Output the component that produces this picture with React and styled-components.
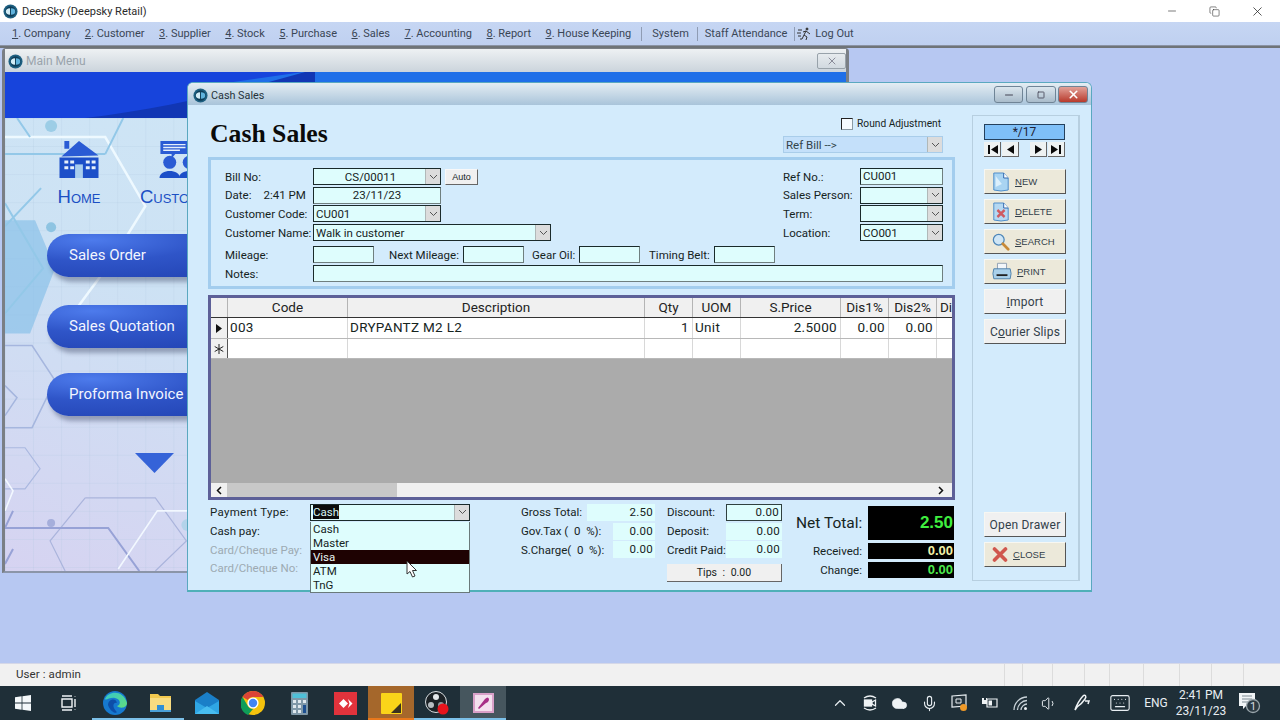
import React from 'react'
import styled, {createGlobalStyle} from 'styled-components'
import {ChevronUp, Cloud, Mic, Volume1, Keyboard, Minus, X, Copy, Square} from 'lucide-react'

const ui = 'Roboto, "Noto Sans", sans-serif'

const Global = createGlobalStyle`
  html, body { margin: 0; padding: 0; overflow: hidden; background: #b7c8f2; }
  * { box-sizing: border-box; }
  u { text-underline-offset: 1px; text-decoration-thickness: 1px; }
`

const Screen = styled.div`
  width: 1280px;
  height: 720px;
  display: flex;
  flex-direction: column;
  font-family: ${ui};
  font-size: 12px;
  color: #16241e;
  overflow: hidden;
`

/* app frame */
const TitleBar = styled.div`
  height: 22px;
  background: #fff;
  display: flex;
  align-items: center;
  padding-left: 3px;
  gap: 4px;
  color: #2a2a2a;
  font-size: 11px;
`
const FrameButtons = styled.div`
  margin-left: auto;
  padding-right: 1px;
  display: flex;
  align-items: center;
  color: #222;
`
const FrameButton = styled.div`
  width: 43px;
  display: flex;
  justify-content: center;
`
const MenuBar = styled.div`
  height: 24px;
  background: linear-gradient(#c6d6f3, #bfd0f0);
  border-bottom: 1px solid #8a93a4;
  display: flex;
  align-items: center;
  padding-left: 12px;
  gap: 14.5px;
  font-size: 11px;
  color: #3a4656;
  white-space: nowrap;
`
const MenuSep = styled.span`
  width: 1px;
  height: 14px;
  background: #8f9cb4;
  margin: 0 ${p => p.$r}px 0 ${p => p.$l}px;
`
const LogOut = styled.span`
  display: flex;
  align-items: center;
  gap: 3px;
  margin-left: -2px;
`
const Desktop = styled.div`
  flex: 1;
  position: relative;
  background: #b7c8f2;
  border-top: 2px solid #6f7478;
`
const StatusBar = styled.div`
  height: 23px;
  background: #f1f1f1;
  border-top: 1px solid #d5d8e8;
  display: flex;
  align-items: center;
  padding-left: 16px;
  color: #333;
  font-size: 11.5px;
  letter-spacing: 0.1px;
`
const StatusText = styled.span`
  margin-bottom: 2px;
`
const StatusCells = styled.div`
  margin-left: auto;
  display: flex;
  height: 100%;
  margin-right: 8px;
`
const StatusCell = styled.div`
  width: ${p => p.$w}px;
  border-left: 1px solid #dcdcdc;
`

/* main menu window, behind */
const MainWindow = styled.div`
  position: absolute;
  left: 2px;
  top: 0;
  width: 847px;
  height: 525px;
  background: #c4d6ee;
  border: 3px solid #7a7f85;
  border-top: 1px solid #7a7f85;
  border-bottom: 2px solid #8b95a8;
  border-radius: 4px 4px 0 0;
  display: flex;
  flex-direction: column;
`
const MainTitle = styled.div`
  height: 23px;
  flex: none;
  background: linear-gradient(#eef1f3, #cbd4dc);
  display: flex;
  align-items: center;
  padding: 1px 0 0 3px;
  gap: 3px;
  color: #9aa4ac;
  font-size: 12px;
`
const GhostClose = styled.div`
  margin-left: auto;
  width: 29px;
  height: 16px;
  border: 1px solid #98a2aa;
  border-radius: 2px;
  display: flex;
  align-items: center;
  justify-content: center;
  color: #667;
`
const Banner = styled.svg`
  display: block;
  flex: none;
  width: 100%;
  height: 46px;
`
const MainBody = styled.div`
  flex: 1;
  position: relative;
  overflow: hidden;
  background: linear-gradient(200deg, #cfe8f7 0%, #cde2f4 55%, #d6d3f1 100%);
  padding: 22px 0 0 42px;
`
const MainArt = styled.svg`
  position: absolute;
  left: 0;
  top: 0;
  width: 100%;
  height: 100%;
`
const Tiles = styled.div`
  position: relative;
  display: flex;
  gap: 39px;
  margin-left: 11px;
  height: 66px;
`
const Tile = styled.div`
  width: ${p => p.$w}px;
  display: flex;
  flex-direction: column;
  align-items: center;
  color: #1b4fc4;
  font-family: "Liberation Sans", sans-serif;
  font-size: 18.5px;
  line-height: 18px;
  white-space: nowrap;
  font-variant: small-caps;
  gap: 9px;
`
const Pills = styled.div`
  position: relative;
  display: flex;
  flex-direction: column;
  margin-top: 28px;
`
const Pill = styled.div`
  width: 240px;
  height: 43px;
  margin-top: ${p => p.$gap}px;
  border-radius: 22px 0 0 22px;
  background: radial-gradient(ellipse at 45px 6px, #4d7bec 0%, #2f55c8 40%, #1f3fae 100%);
  box-shadow: 3px 5px 4px rgba(70, 80, 110, 0.45);
  color: #f2f5ff;
  font-size: 15px;
  display: flex;
  align-items: center;
  padding: 0 0 2px 22px;
`
const DownArrow = styled.div`
  position: relative;
  width: 39px;
  height: 20px;
  margin: 37px 0 0 88px;
  background: #3563d8;
  clip-path: polygon(0 0, 100% 0, 50% 100%);
`

/* cash sales window */
const SalesWindow = styled.div`
  position: absolute;
  left: 187px;
  top: 34px;
  width: 905px;
  height: 510px;
  background: #d3ebfc;
  border: 1px solid #5aa8c0;
  border-bottom: 2px solid #4fb0b8;
  border-radius: 6px 6px 0 0;
  display: flex;
  flex-direction: column;
`
const SalesTitle = styled.div`
  height: 22px;
  flex: none;
  background: linear-gradient(#e4edf3, #a9c4da);
  border-radius: 5px 5px 0 0;
  display: flex;
  align-items: center;
  padding: 3px 3px 0 5px;
  gap: 3px;
  font-size: 10.8px;
  color: #26323a;
`
const WinControls = styled.div`
  margin-left: auto;
  display: flex;
  gap: 2.5px;
`
const WinControl = styled.div`
  width: ${p => p.$w}px;
  height: 17px;
  margin-top: -2px;
  border: 1px solid #6f8496;
  border-radius: 3px;
  background: ${p => p.$close ? 'linear-gradient(#e2a198, #b83a2c)' : 'linear-gradient(#dbe6ee, #a9bccb)'};
  color: ${p => p.$close ? '#fff' : '#445'};
  display: flex;
  align-items: center;
  justify-content: center;
`
const SalesBody = styled.div`
  flex: 1;
  display: flex;
  padding-left: 20px;
  gap: 17px;
`
const Column = styled.div`
  width: 747px;
  display: flex;
  flex-direction: column;
`
const Header = styled.div`
  height: 52px;
  display: flex;
  justify-content: space-between;
  padding: 0 12px 0 2px;
`
const BigTitle = styled.h1`
  margin: 15px 0 0;
  font-family: "Liberation Serif", serif;
  font-size: 25.7px;
  line-height: 28px;
  font-weight: 700;
  color: #0a0a0a;
`
const HeaderRight = styled.div`
  width: 160px;
  padding-top: 12px;
  display: flex;
  flex-direction: column;
  gap: 6px;
`
const RoundAdjust = styled.div`
  display: flex;
  align-items: center;
  justify-content: flex-end;
  gap: 4px;
  height: 13px;
  font-size: 10.2px;
  padding-right: 2px;
  white-space: nowrap;
`
const CheckBox = styled.span`
  width: 12px;
  height: 12px;
  background: #f6fbff;
  border: 1px solid #8a9aa4;
  border-top-color: #222;
  border-left-color: #222;
`
const FormBox = styled.div`
  height: 132px;
  border: 3px solid #a3cdee;
  padding: 8px 9px 0 14px;
  display: flex;
  flex-direction: column;
`
const FormTop = styled.div`
  display: flex;
  justify-content: space-between;
`
const Rows = styled.div`
  display: flex;
  flex-direction: column;
  gap: 1.7px;
`
const Row = styled.div`
  display: flex;
  align-items: center;
  height: 17px;
  margin-top: ${p => p.$top || 0}px;
`
const Label = styled.span`
  width: ${p => p.$w ? p.$w + 'px' : 'auto'};
  flex: none;
  white-space: nowrap;
  margin-left: ${p => p.$left || 0}px;
  color: ${p => p.$muted ? '#9daab2' : 'inherit'};
  font-size: 11.5px;
`
const TimeText = styled.span`
  margin-left: 12px;
`
const Input = styled.div`
  width: ${p => p.$w ? p.$w + 'px' : 'auto'};
  flex: ${p => p.$w ? 'none' : 1};
  height: 17px;
  line-height: 15px;
  background: #defdfd;
  border: 1px solid #6f7f7f;
  border-top-color: #1a2a2a;
  border-left-color: #1a2a2a;
  padding: 0 2px;
  font-size: 11.5px;
  text-align: ${p => p.$center ? 'center' : 'left'};
`
const SelectBox = styled.div`
  position: relative;
  width: ${p => p.$w}px;
  flex: none;
  height: 17px;
  display: flex;
  align-items: center;
  background: ${p => p.$flat ? '#c4e0fa' : '#defdfd'};
  border: 1px solid ${p => p.$flat ? '#a9cdea' : '#1a2a2a'};
  font-size: 11.5px;
  padding-left: 2px;
  color: ${p => p.$flat ? '#33444c' : 'inherit'};
`
const SelectText = styled.span`
  flex: 1;
  text-align: ${p => p.$center ? 'center' : 'left'};
`
const Selected = styled.span`
  background: #0c0c0c;
  color: #d8f4f4;
`
const SelectArrow = styled.span`
  width: 15px;
  height: 15px;
  flex: none;
  background: #dcdcdc;
  border-left: 1px solid #b0b8b8;
  display: flex;
  align-items: center;
  justify-content: center;
  color: #555;
`
const AutoButton = styled.div`
  width: 33px;
  height: 16px;
  margin-left: 4px;
  background: #f0f0f0;
  border: 1px solid #f8f8f8;
  border-right-color: #666;
  border-bottom-color: #666;
  font-family: "Liberation Sans", sans-serif;
  font-size: 9px;
  line-height: 14px;
  text-align: center;
`

/* data grid */
const Grid = styled.div`
  margin-top: 6px;
  height: 205px;
  border: 3px solid #5d6098;
  display: flex;
  flex-direction: column;
  background: #ababab;
  font-size: 13.5px;
`
const GridRow = styled.div`
  display: grid;
  grid-template-columns: 17px 120px 297px 48px 48px 100px 48px 48px 16px;
  height: ${p => p.$h}px;
  flex: none;
  background: #fff;
  border-bottom: 1px solid ${p => p.$head ? '#333' : '#b8b8b8'};
  overflow: hidden;
`
const HeadCell = styled.div`
  background: #f0f0f0;
  border-right: 1px solid #b4b4b4;
  text-align: ${p => p.$clip ? 'left' : 'center'};
  padding-left: ${p => p.$clip ? 3 : 0}px;
  line-height: 19px;
  color: #222;
`
const Cell = styled.div`
  border-right: 1px solid #d8d8d8;
  padding: 0 3px 0 2px;
  line-height: 19px;
  letter-spacing: 0.3px;
  white-space: nowrap;
  text-align: ${p => p.$right ? 'right' : 'left'};
`
const RowHead = styled.div`
  background: #f0f0f0;
  border-right: 1px solid #555;
  display: flex;
  align-items: center;
  justify-content: center;
  color: #222;
`
const GridFill = styled.div`
  flex: 1;
`
const ScrollBar = styled.div`
  height: 14px;
  flex: none;
  background: #f0f0f0;
  display: flex;
  align-items: center;
  justify-content: space-between;
  padding-right: 3px;
  color: #111;
`
const ScrollEnd = styled.span`
  width: 16px;
  display: flex;
  justify-content: center;
`
const ScrollThumb = styled.span`
  width: 170px;
  height: 14px;
  background: #c8c8c8;
  margin-right: auto;
`

/* totals */
const Bottom = styled.div`
  display: flex;
  padding: 3px 0 0 2px;
`
const Stack = styled.div`
  width: ${p => p.$w}px;
  margin-left: ${p => p.$left || 0}px;
  flex: none;
  display: flex;
  flex-direction: column;
`
const SumRow = styled.div`
  height: 18.7px;
  display: flex;
  align-items: center;
  justify-content: space-between;
`
const PayField = styled.div`
  position: relative;
  margin-left: 100px;
`
const PayLabel = styled(Label)`
  position: absolute;
  left: -100px;
  top: 1px;
  letter-spacing: 0.3px;
`
const Dropdown = styled.div`
  position: absolute;
  left: -1px;
  top: 17px;
  width: 160px;
  height: 71px;
  z-index: 3;
  background: #defdfd;
  border: 1px solid #6a7a7a;
  border-top: 0;
  font-size: 11.5px;
`
const Option = styled.div`
  height: 14px;
  line-height: 14px;
  padding-left: 2px;
  background: ${p => p.$active ? '#1e0202' : 'transparent'};
  color: ${p => p.$active ? '#e8f4f4' : 'inherit'};
`
const Pointer = styled.svg`
  position: absolute;
  left: 95px;
  top: 38px;
  width: 12px;
  height: 18px;
`
const Amount = styled.div`
  width: ${p => p.$w}px;
  height: 17px;
  line-height: ${p => p.$boxed ? 15 : 17}px;
  flex: none;
  background: #defdfd;
  border: ${p => p.$boxed ? '1px solid #30403f' : '0'};
  padding-right: 2px;
  text-align: right;
  font-size: 11.5px;
  letter-spacing: 0.3px;
`
const TipsButton = styled.div`
  margin-top: 5px;
  width: 115px;
  height: 18px;
  background: #f0f0f0;
  border-right: 1px solid #666;
  border-bottom: 1px solid #666;
  text-align: center;
  font-size: 10.5px;
  line-height: 17px;
  word-spacing: 3px;
`
const NetRow = styled.div`
  display: flex;
  align-items: center;
  justify-content: space-between;
  margin-top: ${p => p.$top || 0}px;
`
const NetLabel = styled.span`
  font-size: ${p => p.$big ? 15.5 : 11.5}px;
  width: 66px;
  white-space: nowrap;
  text-align: right;
`
const LedBox = styled.div`
  width: 86px;
  height: ${p => p.$h}px;
  line-height: ${p => p.$h}px;
  background: #000;
  color: ${p => p.$c};
  font-family: "Liberation Sans", sans-serif;
  font-weight: 700;
  font-size: ${p => p.$big ? 17 : 13}px;
  text-align: right;
  padding-right: 1px;
`

/* right hand panel */
const Panel = styled.div`
  width: 108px;
  margin: 10px 0 9px;
  border: 1px solid #b7cfe0;
  border-right-width: 2px;
  padding: 8px 13px 0 11px;
  display: flex;
  flex-direction: column;
`
const Pager = styled.div`
  height: 16px;
  line-height: 15px;
  background: #7fc0f8;
  border: 1px solid #24405c;
  text-align: center;
  color: #223;
`
const NavRow = styled.div`
  display: flex;
  margin-top: 2px;
  gap: 1px;
`
const NavButton = styled.div`
  width: 17px;
  height: 15px;
  margin-left: ${p => p.$left || 0}px;
  border-right: 1px solid #666;
  border-bottom: 1px solid #666;
  background: #eef2f2;
  display: flex;
  align-items: center;
  justify-content: center;
`
const Actions = styled.div`
  display: flex;
  flex-direction: column;
  gap: 5px;
  margin-top: ${p => p.$top}px;
`
const Action = styled.div`
  height: 25px;
  width: 82px;
  background: ${p => p.$icon ? '#ece9da' : '#f0f0f0'};
  border: 1px solid #f7f7f2;
  border-right-color: #555;
  border-bottom-color: #555;
  display: flex;
  align-items: center;
  justify-content: ${p => p.$icon ? 'flex-start' : 'center'};
  padding-left: ${p => p.$icon ? 7 : 0}px;
  gap: 5px;
  font-family: ${p => p.$icon ? '"Liberation Sans", sans-serif' : 'inherit'};
  font-size: ${p => p.$icon ? 9.5 : 12}px;
  letter-spacing: ${p => p.$icon ? 0 : 0.2}px;
  color: #33404a;
  white-space: nowrap;
`

/* taskbar */
const Taskbar = styled.div`
  height: 34px;
  background: #1f2f38;
  display: flex;
  align-items: stretch;
  color: #e8eef2;
`
const TaskTile = styled.div`
  width: 46px;
  display: flex;
  align-items: center;
  justify-content: center;
  background: ${p => p.$bg || 'transparent'};
  box-shadow: ${p => p.$line ? `inset 0 -2px 0 ${p.$line}` : 'none'};
`
const Tray = styled.div`
  margin-left: auto;
  display: flex;
  align-items: center;
  padding-right: 10px;
`
const TrayItem = styled.div`
  width: ${p => p.$w}px;
  display: flex;
  justify-content: center;
  align-items: center;
  font-size: 12px;
  line-height: 16px;
  text-align: center;
`

const Logo = () => (
  <svg width="15" height="15" viewBox="0 0 16 16">
    <circle cx="8" cy="8" r="7.5" fill="#1d5f80" />
    <circle cx="8" cy="8" r="5.5" fill="#0e3d58" />
    <path d="M3 8a5 3.5 0 0 1 4.500-3.500v7A5 3.500 0 0 1 3 8z" fill="#d2ecf6" />
    <path d="M8.500 4.500a4.500 3.500 0 0 1 4.500 3.500 4.500 3.500 0 0 1-4.500 3.500z" fill="#5fb2dc" />
  </svg>
)

const Chevron = () => (
  <svg width="9" height="6" viewBox="0 0 9 6"><path d="M1 1l3.500 3.500L8 1" fill="none" stroke="currentColor" strokeWidth="1" /></svg>
)

const Select = ({w, value, center, flat, children}) => (
  <SelectBox $w={w} $flat={flat}>
    <SelectText $center={center}>{value}</SelectText>
    <SelectArrow><Chevron /></SelectArrow>
    {children}
  </SelectBox>
)

const BannerArt = () => (
  <Banner viewBox="0 0 841 46" preserveAspectRatio="none">
    <rect width="841" height="46" fill="#1744dc" />
    <path d="M298 0H841V14H200z" fill="#1f6fe8" />
    <path d="M80 46C150 38 230 20 300 0H310V46z" fill="#1136b4" />
  </Banner>
)

const Art = () => (
  <MainArt viewBox="0 0 841 452" preserveAspectRatio="xMinYMin slice">
    <defs>
      <pattern id="mesh" width="28" height="28" patternUnits="userSpaceOnUse">
        <path d="M28 0H0V28" fill="none" stroke="#a9c2dc" strokeWidth="0.7" opacity="0.55" />
      </pattern>
    </defs>
    <rect width="841" height="452" fill="url(#mesh)" />
    <path d="M0 102H30L50 150L25 215H0z" fill="#84bfe8" opacity="0.65" />
    <path d="M0 19H100L140 88L104 146L48 222" fill="none" stroke="#eef9ff" strokeWidth="2.500" />
    <path d="M0 36H100M12 0L25 19M0 85L38 150L0 195M100 36L118 0M36 70L0 108" fill="none" stroke="#93c8e8" strokeWidth="2" />
    <circle cx="46" cy="8" r="6" fill="#9ccde6" />
    <circle cx="46" cy="109" r="5" fill="#8ec4e2" />
    <path d="M0 227H27L50 262L27 309H0M0 267L12 279L0 297" fill="none" stroke="#a5b6de" strokeWidth="1.500" />
    <path d="M0 329H20L35 350L20 370H0" fill="none" stroke="#aab8e0" strokeWidth="1.200" />
    <path d="M80 379H150L181 422L150 452M80 379L45 422L60 452" fill="none" stroke="#aab4dc" strokeWidth="1.200" />
    <path d="M0 409H103L134 452M8 392L0 409M8 430L0 445" fill="none" stroke="#97a2d6" strokeWidth="2" />
    <circle cx="46" cy="404" r="4" fill="#a5aedb" />
    <circle cx="182" cy="406" r="6" fill="#b3d3ea" />
    <path d="M183 392H152L113 450M0 360L8 372L0 392" fill="none" stroke="#f2f8ff" strokeWidth="1.600" />
  </MainArt>
)

const HomeIcon = () => (
  <svg width="42" height="39" viewBox="0 0 42 40">
    <path d="M3 17L21 1L41 16zM6 1h5v8H6z" fill="#2a5bd4" />
    <path d="M1 18H41V39H1z" fill="#1c4fc8" />
    <path d="M6 21h4v3H6zM12 21h4v3h-4zM6 27h4v3H6zM12 27h4v3h-4zM28 21h4v3h-4zM34 21h4v3h-4zM28 27h4v3h-4zM34 27h4v3h-4z" fill="#e6f0fa" />
    <path d="M17 25h8v14h-8z" fill="#a8cdee" />
  </svg>
)

const CrowdIcon = () => (
  <svg width="78" height="39" viewBox="-18 0 78 42">
    <path d="M1 1H32V15H17L13 20V15H1z" fill="#2a5bd4" />
    <path d="M4 5H28M4 8H28M4 11H22" stroke="#e6f0fa" strokeWidth="1.500" />
    <circle cx="11" cy="24" r="7" fill="#2a5bd4" />
    <path d="M0 41C0 31 22 31 22 41z" fill="#1c4fc8" />
    <circle cx="32" cy="24" r="7" fill="#2a5bd4" />
    <path d="M21 41C21 31 43 31 43 41z" fill="#1c4fc8" />
  </svg>
)

const NewIcon = () => (
  <svg width="18" height="20" viewBox="0 0 20 20" preserveAspectRatio="none">
    <path d="M2 1H13L18 6V18Q10 20 2 18z" fill="#a9d4f2" stroke="#4a8ac8" />
    <path d="M13 1V6H18" fill="#fff" stroke="#2a62a8" />
    <path d="M4 4L11 12L4 15z" fill="#dcf0fc" />
  </svg>
)
const DeleteIcon = () => (
  <svg width="18" height="20" viewBox="0 0 20 20" preserveAspectRatio="none">
    <path d="M2 1H13L18 6V18Q10 20 2 18z" fill="#b5d8f2" stroke="#4a8ac8" />
    <path d="M13 1V6H18" fill="#fff" stroke="#2a62a8" />
    <path d="M6 8L14 15M14 8L6 15" stroke="#cf5a60" strokeWidth="2.600" />
  </svg>
)
const SearchIcon = () => (
  <svg width="18" height="18" viewBox="0 0 20 20">
    <circle cx="7.500" cy="7.500" r="6" fill="#cfe6f6" stroke="#4d86b8" strokeWidth="1.400" />
    <path d="M12 12L18 18" stroke="#c88a38" strokeWidth="3" strokeLinecap="round" />
  </svg>
)
const PrintIcon = () => (
  <svg width="20" height="19" viewBox="0 0 22 20">
    <path d="M6 1H16V8H6z" fill="#f2f6fa" stroke="#8a9cb0" />
    <path d="M2 7H20Q22 12 20 18H2Q0 12 2 7z" fill="#a9d0ea" stroke="#4a7ea8" />
    <path d="M5 13H17V15H5z" fill="#222" />
  </svg>
)
const CloseIcon = () => (
  <svg width="16" height="15" viewBox="0 0 15 15">
    <path d="M2 2L13 13M13 2L2 13" stroke="#d0574e" strokeWidth="3.600" strokeLinecap="round" />
  </svg>
)

const Nav = ({d}) => (
  <svg width="13" height="11" viewBox="0 0 13 11"><path d={d} fill="#0a0a0a" /></svg>
)

const NewRowMark = () => (
  <svg width="10" height="10" viewBox="0 0 10 10" fill="none" stroke="#222" strokeWidth="1">
    <path d="M5 0V10M0.700 2.500L9.300 7.500M9.300 2.500L0.700 7.500" />
  </svg>
)

const RunnerIcon = () => (
  <svg width="15" height="14" viewBox="0 0 15 14" fill="none" stroke="#333" strokeWidth="1">
    <circle cx="10" cy="2" r="1" fill="#333" />
    <path d="M9 4L7 8L10 10L9 13M7 8L5 12H3M9 4L13 7M9 4L6 5M1 3H5M0 6H4M1 9H4" />
  </svg>
)

const WinLogo = () => (
  <svg width="16" height="16" viewBox="0 0 16 16" fill="#f4f8fa">
    <path d="M0 2.300L6.600 1.300V7.600H0zM7.400 1.200L16 0V7.600H7.400zM0 8.400H6.600V14.700L0 13.700zM7.400 8.400H16V16L7.400 14.800z" />
  </svg>
)
const TaskView = () => (
  <svg width="16" height="16" viewBox="0 0 16 16" fill="none" stroke="#f0f4f6" strokeWidth="1.400">
    <path d="M1 1H11M1 15H11M1 4H11V12H1zM14 1V1.500M14 4V12M14 14.500V15" />
  </svg>
)
const EdgeIcon = () => (
  <svg width="24" height="24" viewBox="0 0 24 24">
    <defs>
      <linearGradient id="edgeA" x1="0" y1="0" x2="1" y2="1">
        <stop offset="0" stopColor="#36c6c8" />
        <stop offset="1" stopColor="#62dd7c" />
      </linearGradient>
    </defs>
    <circle cx="12" cy="12" r="12" fill="#1679cf" />
    <path d="M2 8C5 0 20 -2 24 12C24 17 17 18 14 15C18 14 18 8 12 7C7 6 3 10 2 8z" fill="url(#edgeA)" />
    <path d="M5 14C5 8 13 6 14 12C10 11 9 16 13 20C16 23 8 23 5 14z" fill="#0d4ea8" />
  </svg>
)
const FolderIcon = () => (
  <svg width="22" height="20" viewBox="0 0 22 20">
    <path d="M0 1H8L10 3H21V18H0z" fill="#f2c94f" />
    <path d="M0 5H21V18H0z" fill="#f8dc80" />
    <path d="M7 12H14V19H7z" fill="#2f8fd6" />
    <path d="M0 17H21V19H0z" fill="#4aa0d8" />
  </svg>
)
const MailIcon = () => (
  <svg width="24" height="22" viewBox="0 0 24 22">
    <path d="M12 0L24 8V22H0V8z" fill="#1a7fc8" />
    <path d="M0 9L12 16L24 9V22H0z" fill="#2fa6e4" />
    <path d="M0 22L12 14L24 22z" fill="#48bdf0" />
  </svg>
)
const ChromeIcon = () => (
  <svg width="24" height="24" viewBox="0 0 24 24">
    <circle cx="12" cy="12" r="12" fill="#f4c20d" />
    <path d="M12 0A12 12 0 0 1 22.400 6H12A6 6 0 0 0 6.800 9L1.600 6A12 12 0 0 1 12 0z" fill="#db4437" />
    <path d="M1.600 6L6.800 15A6 6 0 0 0 12 18L7 24A12 12 0 0 1 1.600 6z" fill="#0f9d58" />
    <circle cx="12" cy="12" r="5.600" fill="#fff" />
    <circle cx="12" cy="12" r="4.200" fill="#4285f4" />
  </svg>
)
const CalcIcon = () => (
  <svg width="17" height="23" viewBox="0 0 17 23">
    <rect width="17" height="23" rx="1" fill="#7f98a8" />
    <path d="M1.500 1.500H15.500V6H1.500z" fill="#4fc0d8" />
    <path d="M2 8h3v3H2zM7 8h3v3H7zM12 8h3v3h-3zM2 13h3v3H2zM7 13h3v3H7zM2 18h3v3H2zM7 18h3v3H7z" fill="#dfe8ee" />
    <path d="M12 13h3v8h-3z" fill="#1c4f90" />
  </svg>
)
const RemoteIcon = () => (
  <svg width="23" height="23" viewBox="0 0 23 23">
    <rect width="23" height="23" fill="#e2333c" />
    <path d="M5 11.500L9.500 7L14 11.500L9.500 16z" fill="#fff" />
    <path d="M14 7L18.500 11.500L14 16L15.500 11.500z" fill="#fff" />
  </svg>
)
const StickyIcon = () => (
  <svg width="21" height="21" viewBox="0 0 21 21">
    <rect width="21" height="21" rx="1" fill="#fad419" />
    <path d="M10 20L20 10V20z" fill="#3a3220" />
  </svg>
)
const ObsIcon = () => (
  <svg width="24" height="24" viewBox="0 0 24 24">
    <circle cx="11" cy="11" r="10.500" fill="#1c2226" stroke="#d8dde0" strokeWidth="1" />
    <circle cx="11" cy="6" r="3" fill="#e4e8ea" />
    <circle cx="6" cy="14" r="3" fill="#b8bec2" />
    <circle cx="16" cy="14" r="3" fill="#8e959a" />
    <circle cx="18" cy="18" r="5.500" fill="#e8141c" />
  </svg>
)
const PublisherIcon = () => (
  <svg width="21" height="20" viewBox="0 0 21 20">
    <rect width="21" height="20" fill="#d9a0c8" />
    <rect x="2" y="2" width="17" height="16" fill="#f4e0ee" />
    <path d="M5 15L12 6Q15 3 16 6Q16 9 13 10L6 16z" fill="#a82e86" />
  </svg>
)
const MeetIcon = () => (
  <svg width="14" height="18" viewBox="0 0 14 18" fill="none" stroke="#eef2f4" strokeWidth="1.300">
    <path d="M1 4Q7 0 13 4M1 14Q7 18 13 14" />
    <rect x="1.500" y="6" width="7" height="6" fill="#eef2f4" />
    <path d="M9 8L12.500 6V12L9 10z" />
  </svg>
)
const DisplayIcon = () => (
  <svg width="17" height="18" viewBox="0 0 17 18">
    <path d="M1 2L15 1V12L1 13z" fill="#26343c" stroke="#e8eef2" strokeWidth="1.200" />
    <path d="M5 5H10V9H5z" fill="none" stroke="#e8eef2" />
    <circle cx="12.500" cy="13.500" r="3.500" fill="#f09a28" />
  </svg>
)
const BatteryIcon = () => (
  <svg width="16" height="12" viewBox="0 0 16 12" fill="#eef2f4">
    <path d="M0 1H2V3H4V1H5V7H0z" />
    <path d="M5 2H15V10H5z" fill="none" stroke="#eef2f4" strokeWidth="1.200" />
    <path d="M6.500 3.500H10V8.500H6.500z" />
  </svg>
)
const SignalIcon = () => (
  <svg width="14" height="14" viewBox="0 0 14 14" fill="none" stroke="#c8d2d8" strokeWidth="1.300">
    <path d="M1 14C1 7 7 1 14 1M4.500 14C4.500 9 9 4.500 14 4.500M8 14C8 11 11 8 14 8" />
    <circle cx="12.500" cy="12.500" r="1.500" fill="#eef2f4" stroke="none" />
  </svg>
)
const PenIcon = () => (
  <svg width="17" height="18" viewBox="0 0 17 18" fill="none" stroke="#eef2f4" strokeWidth="1.500">
    <path d="M1 16C2 12 6 5 9 2C11 0 13 2 11 5C9 8 6 11 3 13M1 16L3 13M11 7L15 7L14 10" />
  </svg>
)
const BellIcon = () => (
  <svg width="24" height="22" viewBox="0 0 24 22">
    <path d="M1 1H17V14H8L5 17V14H1z" fill="#f0f4f6" />
    <path d="M4 4H14M4 7H14M4 10H11" stroke="#7d8a92" />
    <circle cx="15" cy="14" r="6.500" fill="#2c3a42" stroke="#9aa6ac" strokeWidth="1.300" />
    <text x="15" y="18" fontSize="11" textAnchor="middle" fill="#d8dee2" fontFamily="Roboto, sans-serif">1</text>
  </svg>
)

const menu = [
  ['1', 'Company'],
  ['2', 'Customer'],
  ['3', 'Supplier'],
  ['4', 'Stock'],
  ['5', 'Purchase'],
  ['6', 'Sales'],
  ['7', 'Accounting'],
  ['8', 'Report'],
  ['9', 'House Keeping'],
]

const tasks = [
  {icon: <WinLogo />},
  {icon: <TaskView />},
  {icon: <EdgeIcon />, line: '#7cc0e8'},
  {icon: <FolderIcon />, line: '#7cc0e8'},
  {icon: <MailIcon />},
  {icon: <ChromeIcon />},
  {icon: <CalcIcon />},
  {icon: <RemoteIcon />},
  {icon: <StickyIcon />, bg: '#a5672b', line: '#e8781c'},
  {icon: <ObsIcon />, line: '#7cc0e8'},
  {icon: <PublisherIcon />, bg: '#46565e', line: '#7cc0e8'},
]

const App = () => (
  <Screen>
    <Global />
    <TitleBar>
      <Logo />
      <span>DeepSky (Deepsky Retail)</span>
      <FrameButtons>
        <FrameButton><Minus size={12} strokeWidth={1.2} /></FrameButton>
        <FrameButton><Copy size={11} strokeWidth={1.2} /></FrameButton>
        <FrameButton><X size={15} strokeWidth={1.2} /></FrameButton>
      </FrameButtons>
    </TitleBar>
    <MenuBar>
      {menu.map(([n, name]) => <span key={n}><u>{n}</u>. {name}</span>)}
      <MenuSep $l={-5} $r={-4} />
      <span>System</span>
      <MenuSep $l={-6} $r={-8} />
      <span>Staff Attendance</span>
      <MenuSep $l={-8} $r={-10} />
      <LogOut><RunnerIcon />Log Out</LogOut>
    </MenuBar>
    <Desktop>
      <MainWindow>
        <MainTitle>
          <Logo />
          <span>Main Menu</span>
          <GhostClose><X size={12} strokeWidth={1.4} /></GhostClose>
        </MainTitle>
        <BannerArt />
        <MainBody>
          <Art />
          <Tiles>
            <Tile $w={42}><HomeIcon />Home</Tile>
            <Tile $w={80}><CrowdIcon />Customer</Tile>
          </Tiles>
          <Pills>
            <Pill $gap={0}>Sales Order</Pill>
            <Pill $gap={28}>Sales Quotation</Pill>
            <Pill $gap={25}>Proforma Invoice</Pill>
            <DownArrow />
          </Pills>
        </MainBody>
      </MainWindow>

      <SalesWindow>
        <SalesTitle>
          <Logo />
          <span>Cash Sales</span>
          <WinControls>
            <WinControl $w={29}><Minus size={12} /></WinControl>
            <WinControl $w={30}><Square size={8} strokeWidth={2.5} /></WinControl>
            <WinControl $w={30} $close><X size={13} strokeWidth={3} /></WinControl>
          </WinControls>
        </SalesTitle>
        <SalesBody>
          <Column>
            <Header>
              <BigTitle>Cash Sales</BigTitle>
              <HeaderRight>
                <RoundAdjust><CheckBox />Round Adjustment</RoundAdjust>
                <Select w={160} value="Ref Bill -->" flat />
              </HeaderRight>
            </Header>
            <FormBox>
              <FormTop>
                <Rows>
                  <Row><Label $w={88}>Bill No:</Label><Select w={128} value="CS/00011" center /><AutoButton>Auto</AutoButton></Row>
                  <Row><Label $w={88}>Date:<TimeText>2:41 PM</TimeText></Label><Input $w={128} $center>23/11/23</Input></Row>
                  <Row><Label $w={88}>Customer Code:</Label><Select w={128} value="CU001" /></Row>
                  <Row><Label $w={88}>Customer Name:</Label><Select w={238} value="Walk in customer" /></Row>
                </Rows>
                <Rows>
                  <Row><Label $w={77}>Ref No.:</Label><Input $w={83}>CU001</Input></Row>
                  <Row><Label $w={77}>Sales Person:</Label><Select w={83} value="" /></Row>
                  <Row><Label $w={77}>Term:</Label><Select w={83} value="" /></Row>
                  <Row><Label $w={77}>Location:</Label><Select w={83} value="CO001" /></Row>
                </Rows>
              </FormTop>
              <Row $top={5}>
                <Label $w={88}>Mileage:</Label><Input $w={61} />
                <Label $left={15} $w={74}>Next Mileage:</Label><Input $w={61} />
                <Label $left={8} $w={47}>Gear Oil:</Label><Input $w={61} />
                <Label $left={9} $w={65}>Timing Belt:</Label><Input $w={61} />
              </Row>
              <Row $top={2}><Label $w={88}>Notes:</Label><Input /></Row>
            </FormBox>

            <Grid>
              <GridRow $h={20} $head>
                <HeadCell />
                <HeadCell>Code</HeadCell>
                <HeadCell>Description</HeadCell>
                <HeadCell>Qty</HeadCell>
                <HeadCell>UOM</HeadCell>
                <HeadCell>S.Price</HeadCell>
                <HeadCell>Dis1%</HeadCell>
                <HeadCell>Dis2%</HeadCell>
                <HeadCell $clip>Di</HeadCell>
              </GridRow>
              <GridRow $h={21}>
                <RowHead><svg width="6" height="9" viewBox="0 0 6 9"><path d="M0 0L6 4.500L0 9z" fill="#111" /></svg></RowHead>
                <Cell>003</Cell>
                <Cell>DRYPANTZ M2 L2</Cell>
                <Cell $right>1</Cell>
                <Cell>Unit</Cell>
                <Cell $right>2.5000</Cell>
                <Cell $right>0.00</Cell>
                <Cell $right>0.00</Cell>
                <Cell />
              </GridRow>
              <GridRow $h={20}>
                <RowHead><NewRowMark /></RowHead>
                <Cell /><Cell /><Cell /><Cell /><Cell /><Cell /><Cell /><Cell />
              </GridRow>
              <GridFill />
              <ScrollBar>
                <ScrollEnd><svg width="6" height="9" viewBox="0 0 6 9"><path d="M5 1L1.500 4.500L5 8" fill="none" stroke="#111" strokeWidth="1.500" /></svg></ScrollEnd>
                <ScrollThumb />
                <ScrollEnd><svg width="6" height="9" viewBox="0 0 6 9"><path d="M1 1L4.500 4.500L1 8" fill="none" stroke="#111" strokeWidth="1.500" /></svg></ScrollEnd>
              </ScrollBar>
            </Grid>

            <Bottom>
              <Stack $w={311}>
                <SumRow>
                  <PayField>
                    <PayLabel>Payment Type:</PayLabel>
                    <SelectBox $w={160}>
                      <SelectText><Selected>Cash</Selected></SelectText>
                      <SelectArrow><Chevron /></SelectArrow>
                      <Dropdown>
                        <Option>Cash</Option>
                        <Option>Master</Option>
                        <Option $active>Visa</Option>
                        <Option>ATM</Option>
                        <Option>TnG</Option>
                        <Pointer viewBox="0 0 12 18">
                          <path d="M1 1V14L4 11.500L6.500 17L9 16L6.500 10.500H10.500z" fill="#fff" stroke="#333" strokeWidth="1" />
                        </Pointer>
                      </Dropdown>
                    </SelectBox>
                  </PayField>
                </SumRow>
                <SumRow><Label>Cash pay:</Label></SumRow>
                <SumRow><Label $muted>Card/Cheque Pay:</Label></SumRow>
                <SumRow><Label $muted>Card/Cheque No:</Label></SumRow>
              </Stack>
              <Stack $w={134}>
                <SumRow><Label>Gross Total:</Label><Amount $w={68}>2.50</Amount></SumRow>
                <SumRow><Label>Gov.Tax (&nbsp; 0 &nbsp;%):</Label><Amount $w={42}>0.00</Amount></SumRow>
                <SumRow><Label>S.Charge(&nbsp; 0 &nbsp;%):</Label><Amount $w={42}>0.00</Amount></SumRow>
              </Stack>
              <Stack $w={115} $left={12}>
                <SumRow><Label>Discount:</Label><Amount $w={56} $boxed>0.00</Amount></SumRow>
                <SumRow><Label>Deposit:</Label><Amount $w={56}>0.00</Amount></SumRow>
                <SumRow><Label>Credit Paid:</Label><Amount $w={56}>0.00</Amount></SumRow>
                <TipsButton>Tips : 0.00</TipsButton>
              </Stack>
              <Stack $w={158} $left={14}>
                <NetRow $top={3}><NetLabel $big>Net Total:</NetLabel><LedBox $h={34} $c="#3fee3f" $big>2.50</LedBox></NetRow>
                <NetRow $top={3}><NetLabel>Received:</NetLabel><LedBox $h={16} $c="#f2f2a8">0.00</LedBox></NetRow>
                <NetRow $top={3}><NetLabel>Change:</NetLabel><LedBox $h={16} $c="#4dea4d">0.00</LedBox></NetRow>
              </Stack>
            </Bottom>
          </Column>

          <Panel>
            <Pager>*/17</Pager>
            <NavRow>
              <NavButton><Nav d="M2 1H4V10H2zM12 1V10L5 5.500z" /></NavButton>
              <NavButton><Nav d="M10 1V10L3 5.500z" /></NavButton>
              <NavButton $left={10}><Nav d="M3 1V10L10 5.500z" /></NavButton>
              <NavButton><Nav d="M1 1V10L8 5.500zM9 1H11V10H9z" /></NavButton>
            </NavRow>
            <Actions $top={12}>
              <Action $icon><NewIcon /><span><u>N</u>EW</span></Action>
              <Action $icon><DeleteIcon /><span><u>D</u>ELETE</span></Action>
              <Action $icon><SearchIcon /><span><u>S</u>EARCH</span></Action>
              <Action $icon><PrintIcon /><span><u>P</u>RINT</span></Action>
              <Action><span><u>I</u>mport</span></Action>
              <Action><span>C<u>o</u>urier Slips</span></Action>
            </Actions>
            <Actions $top={168}>
              <Action>Open Drawer</Action>
              <Action $icon><CloseIcon /><span><u>C</u>LOSE</span></Action>
            </Actions>
          </Panel>
        </SalesBody>
      </SalesWindow>
    </Desktop>
    <StatusBar>
      <StatusText>User : admin</StatusText>
      <StatusCells>
        {[18, 30, 32, 25, 34, 36, 32, 32, 29].map((w, i) => <StatusCell key={i} $w={w} />)}
      </StatusCells>
    </StatusBar>
    <Taskbar>
      {tasks.map((t, i) => <TaskTile key={i} $bg={t.bg} $line={t.line}>{t.icon}</TaskTile>)}
      <Tray>
        <TrayItem $w={30}><ChevronUp size={18} strokeWidth={1.6} /></TrayItem>
        <TrayItem $w={29}><MeetIcon /></TrayItem>
        <TrayItem $w={30}><Cloud size={17} fill="#eef2f4" strokeWidth={1} /></TrayItem>
        <TrayItem $w={30}><Mic size={17} strokeWidth={1.6} /></TrayItem>
        <TrayItem $w={30}><DisplayIcon /></TrayItem>
        <TrayItem $w={31}><BatteryIcon /></TrayItem>
        <TrayItem $w={30}><SignalIcon /></TrayItem>
        <TrayItem $w={29}><Volume1 size={17} strokeWidth={1.4} /></TrayItem>
        <TrayItem $w={36}><PenIcon /></TrayItem>
        <TrayItem $w={40}><Keyboard size={22} strokeWidth={1.2} /></TrayItem>
        <TrayItem $w={32}>ENG</TrayItem>
        <TrayItem $w={58}>2:41 PM<br />23/11/23</TrayItem>
        <TrayItem $w={40}><BellIcon /></TrayItem>
      </Tray>
    </Taskbar>
  </Screen>
)

export default App
